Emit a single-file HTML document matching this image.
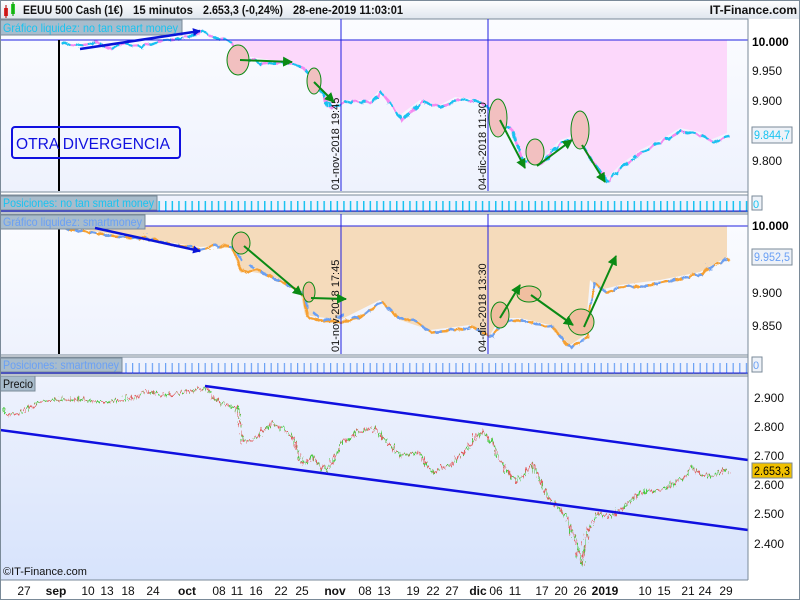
<!DOCTYPE html>
<html><head><meta charset="utf-8"><style>
body{margin:0;width:800px;height:600px;overflow:hidden;background:#fff;font-family:"Liberation Sans",sans-serif}
svg{display:block}
</style></head><body>
<svg width="800" height="600" viewBox="0 0 800 600" xmlns="http://www.w3.org/2000/svg" font-family="Liberation Sans, sans-serif">
<defs>
<linearGradient id="g1" x1="0" y1="0" x2="0" y2="1"><stop offset="0" stop-color="#fbfcff"/><stop offset="1" stop-color="#eef2fd"/></linearGradient>
<linearGradient id="g3" x1="0" y1="0" x2="0" y2="1"><stop offset="0" stop-color="#eef2fd"/><stop offset="1" stop-color="#d7e3fc"/></linearGradient>
<linearGradient id="gh" x1="0" y1="0" x2="0" y2="1"><stop offset="0" stop-color="#ffffff"/><stop offset="1" stop-color="#dfe6ee"/></linearGradient>
<pattern id="tk1" width="6.6" height="18" patternUnits="userSpaceOnUse"><rect x="0" y="3" width="1.5" height="12" fill="#19c3f0"/></pattern>
<pattern id="tk2" width="6.6" height="18" patternUnits="userSpaceOnUse"><rect x="0" y="3" width="1.2" height="12" fill="#6aa0f5"/></pattern>
<marker id="ab" markerWidth="8" markerHeight="8" refX="7" refY="4" orient="auto" markerUnits="userSpaceOnUse"><path d="M0,0L8,4L0,8z" fill="#0a14d8"/></marker>
<marker id="ag" markerWidth="10" markerHeight="10" refX="9" refY="5" orient="auto" markerUnits="userSpaceOnUse"><path d="M0,0L10,5L0,10z" fill="#0a8a14"/></marker>
<filter id="jag" x="-5%" y="-20%" width="110%" height="140%"><feTurbulence type="turbulence" baseFrequency="0.35 0.08" numOctaves="2" seed="3"/><feDisplacementMap in="SourceGraphic" scale="9" xChannelSelector="R" yChannelSelector="G"/></filter>
<filter id="jag2" x="-5%" y="-20%" width="110%" height="140%"><feTurbulence type="turbulence" baseFrequency="0.1 0.05" numOctaves="1" seed="8"/><feDisplacementMap in="SourceGraphic" scale="6" xChannelSelector="R" yChannelSelector="G"/></filter>
</defs>
<!-- header -->
<rect x="0" y="0" width="800" height="19" fill="url(#gh)"/>
<rect x="4" y="8" width="4" height="8" fill="#e03030"/><line x1="6" y1="5" x2="6" y2="18" stroke="#a00" stroke-width="1"/>
<rect x="11" y="4" width="4" height="10" fill="#30d030"/><line x1="13" y1="2" x2="13" y2="16" stroke="#080" stroke-width="1"/>
<g font-size="12" font-weight="bold" fill="#111">
<text x="23" y="14" textLength="100" lengthAdjust="spacingAndGlyphs">EEUU 500 Cash (1€)</text>
<text x="133" y="14" textLength="60" lengthAdjust="spacingAndGlyphs">15 minutos</text>
<text x="203" y="14" textLength="80" lengthAdjust="spacingAndGlyphs">2.653,3 (-0,24%)</text>
<text x="293" y="14" textLength="110" lengthAdjust="spacingAndGlyphs">28-ene-2019 11:03:01</text>
<text x="797" y="14" text-anchor="end">IT-Finance.com</text></g>

<!-- panel 1 -->
<rect x="0" y="19" width="748" height="173" fill="url(#g1)" stroke="#7a8a98"/>
<path d="M230,40 L727,40 L727,133 L710,140 L700,132 L680,128 L660,140 L640,150 L620,165 L605,180 L590,160 L575,135 L560,140 L540,160 L520,155 L510,130 L495,115 L480,100 L455,97 L440,105 L420,100 L400,115 L380,90 L370,100 L345,100 L330,105 L315,80 L300,65 L240,55 Z" fill="#fcd8fb"/>
<g filter="url(#jag2)">
<polyline fill="none" stroke="#f58af0" stroke-width="2.5" points="60,42 80,44 95,40 110,46 125,42 140,45 160,38 180,36 200,30 215,36 230,40 240,55 260,62 280,60 300,65 315,80 330,108 345,100 370,100 380,90 400,118 420,100 440,105 455,97 480,100 495,115 510,130 520,158 540,162 560,140 575,135 590,160 605,180 620,165 640,150 660,140 680,128 700,134 712,140 727,133"/>
<polyline fill="none" stroke="#19c3f0" stroke-width="2.5" stroke-dasharray="8 5" points="60,42 80,44 95,40 110,46 125,42 140,45 160,38 180,36 200,30 215,36 230,40 240,55 260,62 280,60 300,65 315,80 330,108 345,100 370,100 380,90 400,118 420,100 440,105 455,97 480,100 495,115 510,130 520,158 540,162 560,140 575,135 590,160 605,180 620,165 640,150 660,140 680,128 700,134 712,140 727,133"/>
</g>
<line x1="0" y1="40" x2="748" y2="40" stroke="#2020e0"/>
<line x1="59" y1="40" x2="59" y2="191" stroke="#000" stroke-width="2"/>
<line x1="341" y1="19" x2="341" y2="191" stroke="#2020e0"/>
<line x1="488" y1="19" x2="488" y2="191" stroke="#2020e0"/>
<text transform="translate(341,190) rotate(-90)" font-size="11" fill="#111" dy="-2">01-nov-2018 19:45</text>
<text transform="translate(488,190) rotate(-90)" font-size="11" fill="#111" dy="-2">04-dic-2018 11:30</text>
<rect x="0" y="20" width="182" height="15" fill="#a8bccc" stroke="#7a8a98"/>
<text x="3" y="32" font-size="12" fill="#19c3f0" textLength="175" lengthAdjust="spacingAndGlyphs">Gráfico liquidez: no tan smart money</text>
<line x1="80" y1="49" x2="200" y2="31" stroke="#0a14d8" stroke-width="2.5" marker-end="url(#ab)"/>
<g fill="#f2c0c0" stroke="#0a8a14" stroke-width="1">
<ellipse cx="238" cy="60" rx="11" ry="15"/><ellipse cx="314" cy="81" rx="7" ry="13"/>
<ellipse cx="498" cy="118" rx="9" ry="19"/><ellipse cx="535" cy="152" rx="9" ry="13"/><ellipse cx="580" cy="130" rx="9" ry="19"/></g>
<g stroke="#0a8a14" stroke-width="2" marker-end="url(#ag)">
<line x1="240" y1="60" x2="292" y2="62"/><line x1="314" y1="82" x2="334" y2="102"/>
<line x1="500" y1="120" x2="525" y2="168"/><line x1="537" y1="166" x2="572" y2="140"/><line x1="582" y1="145" x2="605" y2="182"/></g>
<rect x="12" y="127" width="168" height="31" fill="none" stroke="#1010e0" stroke-width="2" rx="3"/>
<text x="16" y="149" font-size="16" fill="#1010e0" textLength="154" lengthAdjust="spacingAndGlyphs">OTRA DIVERGENCIA</text>
<text x="752" y="46" font-size="12" font-weight="bold" fill="#000">10.000</text>
<text x="752" y="75" font-size="12" fill="#111">9.950</text>
<text x="752" y="105" font-size="12" fill="#111">9.900</text>
<text x="752" y="165" font-size="12" fill="#111">9.800</text>
<rect x="752" y="127" width="40" height="16" fill="#eef2f8" stroke="#7a8a98"/>
<text x="754" y="139" font-size="12" fill="#19c3f0" textLength="36" lengthAdjust="spacingAndGlyphs">9.844,7</text>

<!-- strip 1 -->
<rect x="0" y="195" width="748" height="17" fill="#eef2fd" stroke="#7a8a98"/>
<rect x="158" y="195" width="590" height="17" fill="url(#tk1)"/>
<line x1="0" y1="211" x2="748" y2="211" stroke="#2020e0"/>
<rect x="0" y="196" width="157" height="14" fill="#a8bccc" stroke="#7a8a98"/>
<text x="3" y="207" font-size="12" fill="#19c3f0" textLength="151" lengthAdjust="spacingAndGlyphs">Posiciones: no tan smart money</text>
<rect x="752" y="196" width="10" height="14" fill="#eef2f8" stroke="#7a8a98"/>
<text x="753" y="208" font-size="11" fill="#19c3f0">0</text>

<!-- panel 2 -->
<rect x="0" y="214" width="748" height="141" fill="url(#g1)" stroke="#7a8a98"/>
<path d="M60,226 L727,226 L727,257 L700,272 L660,280 L620,285 L600,290 L590,280 L585,335 L570,345 L550,325 L520,318 L500,318 L490,335 L470,325 L430,330 L400,320 L380,300 L340,320 L305,315 L300,290 L270,275 L240,270 L230,245 L200,247 L60,226 Z" fill="#f5dbbb"/>
<g filter="url(#jag2)">
<polyline fill="none" stroke="#f6a030" stroke-width="2.5" points="60,226 100,232 150,238 200,247 215,244 230,245 240,270 255,268 270,275 285,282 300,290 305,315 320,318 340,320 355,316 380,300 395,315 410,318 430,330 450,328 470,325 490,335 500,318 520,318 535,322 550,325 565,342 570,345 585,335 592,282 605,290 620,285 640,284 660,280 680,276 700,272 715,262 727,257"/>
<polyline fill="none" stroke="#6aa0f5" stroke-width="2.5" stroke-dasharray="7 7" points="60,226 100,232 150,238 200,247 215,244 230,245 240,258 255,268 270,275 285,282 300,290 305,305 320,318 340,314 355,316 380,300 395,315 410,318 430,330 450,328 470,325 490,335 500,318 520,318 535,322 550,325 565,342 570,345 585,335 592,282 605,290 620,285 640,284 660,280 680,276 700,272 715,262 727,257"/>
</g>
<line x1="0" y1="226" x2="748" y2="226" stroke="#2020e0"/>
<line x1="59" y1="226" x2="59" y2="354" stroke="#000" stroke-width="2"/>
<line x1="341" y1="214" x2="341" y2="354" stroke="#2020e0"/>
<line x1="488" y1="214" x2="488" y2="354" stroke="#2020e0"/>
<text transform="translate(341,352) rotate(-90)" font-size="11" fill="#111" dy="-2">01-nov-2018 17:45</text>
<text transform="translate(488,352) rotate(-90)" font-size="11" fill="#111" dy="-2">04-dic-2018 13:30</text>
<rect x="0" y="215" width="145" height="14" fill="#a8bccc" stroke="#7a8a98"/>
<text x="3" y="226" font-size="12" fill="#6aa0f5" textLength="139" lengthAdjust="spacingAndGlyphs">Gráfico liquidez: smartmoney</text>
<line x1="95" y1="228" x2="200" y2="251" stroke="#0a14d8" stroke-width="2.5" marker-end="url(#ab)"/>
<g fill="#f0bfa0" stroke="#0a8a14" stroke-width="1">
<ellipse cx="241" cy="243" rx="9" ry="11"/><ellipse cx="309" cy="292" rx="6" ry="10"/>
<ellipse cx="500" cy="315" rx="9" ry="13"/><ellipse cx="529" cy="294" rx="12" ry="8"/><ellipse cx="581" cy="322" rx="13" ry="13"/></g>
<g stroke="#0a8a14" stroke-width="2" marker-end="url(#ag)">
<line x1="244" y1="246" x2="302" y2="295"/><line x1="311" y1="298" x2="346" y2="299"/>
<line x1="500" y1="318" x2="520" y2="285"/><line x1="531" y1="295" x2="573" y2="325"/><line x1="584" y1="327" x2="616" y2="256"/></g>
<text x="752" y="230" font-size="12" font-weight="bold" fill="#000">10.000</text>
<text x="752" y="297" font-size="12" fill="#111">9.900</text>
<text x="752" y="330" font-size="12" fill="#111">9.850</text>
<rect x="752" y="249" width="40" height="16" fill="#eef2f8" stroke="#7a8a98"/>
<text x="754" y="261" font-size="12" fill="#6aa0f5" textLength="36" lengthAdjust="spacingAndGlyphs">9.952,5</text>

<!-- strip 2 -->
<rect x="0" y="357" width="748" height="17" fill="#eef2fd" stroke="#7a8a98"/>
<rect x="124" y="357" width="624" height="17" fill="url(#tk2)"/>
<line x1="0" y1="373" x2="748" y2="373" stroke="#2020e0"/>
<rect x="0" y="358" width="122" height="14" fill="#a8bccc" stroke="#7a8a98"/>
<text x="3" y="369" font-size="12" fill="#6aa0f5" textLength="116" lengthAdjust="spacingAndGlyphs">Posiciones: smartmoney</text>
<rect x="752" y="357" width="10" height="15" fill="#eef2f8" stroke="#7a8a98"/>
<text x="753" y="369" font-size="11" fill="#6aa0f5">0</text>

<!-- price panel -->
<rect x="0" y="376" width="748" height="204" fill="url(#g3)" stroke="#7a8a98"/>
<g filter="url(#jag)">
<polyline fill="none" stroke="#e06060" stroke-width="1.6" points="0,408 5,412 20,410 30,404 42,398 60,397 80,397 100,400 115,398 130,396 145,389 160,393 175,392 190,388 205,386 210,395 220,402 235,405 240,440 250,438 260,430 270,420 285,430 290,435 300,462 310,455 325,470 340,440 355,430 370,425 385,440 400,455 415,450 430,470 450,462 470,440 480,428 490,440 495,455 505,470 515,480 530,462 545,495 555,505 565,515 575,545 580,565 585,530 595,512 610,515 625,500 640,490 660,487 675,480 690,466 700,472 710,475 720,468 727,470"/>
<polyline fill="none" stroke="#40d040" stroke-width="1.6" stroke-dasharray="4 5" points="0,408 5,412 20,410 30,404 42,398 60,397 80,397 100,400 115,398 130,396 145,389 160,393 175,392 190,388 205,386 210,395 220,402 235,405 240,440 250,438 260,430 270,420 285,430 290,435 300,462 310,455 325,470 340,440 355,430 370,425 385,440 400,455 415,450 430,470 450,462 470,440 480,428 490,440 495,455 505,470 515,480 530,462 545,495 555,505 565,515 575,545 580,565 585,530 595,512 610,515 625,500 640,490 660,487 675,480 690,466 700,472 710,475 720,468 727,470"/>
</g>
<line x1="205" y1="386" x2="748" y2="460" stroke="#1010e0" stroke-width="2.5"/>
<line x1="0" y1="430" x2="748" y2="530" stroke="#1010e0" stroke-width="2.5"/>
<rect x="0" y="376" width="35" height="15" fill="#a8bccc" stroke="#7a8a98"/>
<text x="3" y="388" font-size="12" fill="#111" textLength="30" lengthAdjust="spacingAndGlyphs">Precio</text>
<text x="3" y="575" font-size="11" fill="#111">©IT-Finance.com</text>
<g font-size="12" fill="#111">
<text x="754" y="402">2.900</text><text x="754" y="431">2.800</text><text x="754" y="460">2.700</text>
<text x="754" y="489">2.600</text><text x="754" y="518">2.500</text><text x="754" y="548">2.400</text></g>
<rect x="752" y="463" width="40" height="15" fill="#f0c000" stroke="#7a8a98"/>
<text x="754" y="475" font-size="12" fill="#000" textLength="36" lengthAdjust="spacingAndGlyphs">2.653,3</text>

<!-- time axis -->
<rect x="0" y="580" width="800" height="20" fill="#fff"/>
<line x1="0" y1="580" x2="748" y2="580" stroke="#7a8a98"/>
<g font-size="12" fill="#111" text-anchor="middle">
<text x="24" y="595">27</text><text x="56" y="595" font-weight="bold">sep</text><text x="88" y="595">10</text><text x="107" y="595">13</text><text x="128" y="595">18</text><text x="153" y="595">24</text><text x="187" y="595" font-weight="bold">oct</text><text x="219" y="595">08</text><text x="237" y="595">11</text><text x="256" y="595">16</text><text x="281" y="595">22</text><text x="302" y="595">25</text><text x="335" y="595" font-weight="bold">nov</text><text x="365" y="595">08</text><text x="384" y="595">13</text><text x="413" y="595">19</text><text x="433" y="595">22</text><text x="452" y="595">27</text><text x="478" y="595" font-weight="bold">dic</text><text x="496" y="595">06</text><text x="515" y="595">11</text><text x="542" y="595">17</text><text x="561" y="595">20</text><text x="580" y="595">26</text><text x="605" y="595" font-weight="bold">2019</text><text x="645" y="595">10</text><text x="664" y="595">15</text><text x="688" y="595">21</text><text x="705" y="595">24</text><text x="726" y="595">29</text></g>
<line x1="748" y1="19" x2="748" y2="580" stroke="#7a8a98"/>
<rect x="0.5" y="0.5" width="799" height="599" fill="none" stroke="#7a8a98"/>
</svg>
</body></html>
